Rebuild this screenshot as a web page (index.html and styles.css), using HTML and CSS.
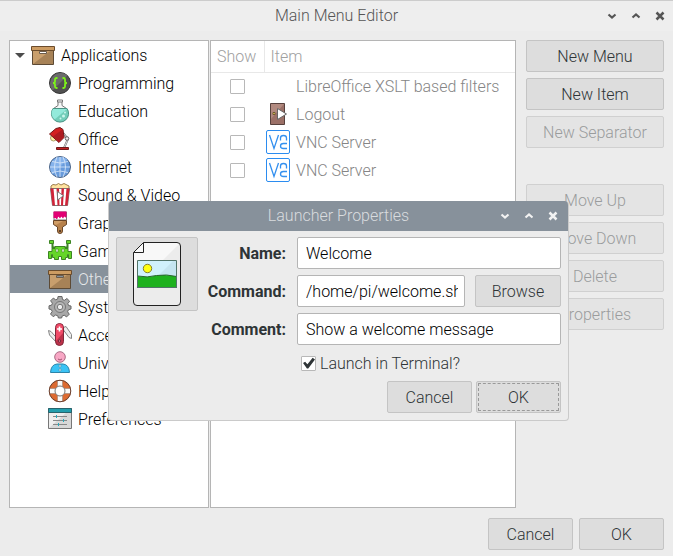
FILE: index.html
```html
<!DOCTYPE html>
<html lang="en">
<head>
<meta charset="utf-8">
<title>Main Menu Editor</title>
<link rel="stylesheet" href="styles.css">
</head>
<body>
<svg class="defs" aria-hidden="true">
  <symbol id="i-box" viewBox="0 0 24 24">
    <path d="M1.500 7.500h21v14h-21z" fill="#a78257" stroke="#5d4a35"/>
    <path d="M2 8h17L2 21z" fill="#c99f6d"/>
    <path d="M.5 3.500h23v4H.5z" fill="#cd9c62" stroke="#6b4c2c"/>
    <path d="M8.500 8.500h7v2h-7z" fill="currentColor" stroke="#6b5c4c"/>
  </symbol>
  <symbol id="i-down" viewBox="0 0 10 10"><path d="M1.500 3.500 5 6.500l3.500-3" fill="none" stroke="currentColor" stroke-width="2.200"/></symbol>
  <symbol id="i-up" viewBox="0 0 10 10"><path d="M1.500 6.500 5 3.500l3.500 3" fill="none" stroke="currentColor" stroke-width="2.200"/></symbol>
  <symbol id="i-close" viewBox="0 0 10 10"><path d="M1.500 1.500l7 7m0-7l-7 7" fill="none" stroke="currentColor" stroke-width="2.500"/></symbol>
  <symbol id="i-vnc" viewBox="0 0 24 24">
    <rect x=".5" y=".5" width="23" height="23" rx="1.500" fill="#fff" stroke="#2b8cf0"/>
    <path d="M3.500 5 8 18.500 12.500 5M14.500 10.500V8q0-2.500 3-2.500t3 2.500v2.500M21 13.500h-3.500q-3 0-3 2.500t3 2.500H21" fill="none" stroke="#3490ef" stroke-width="1.300"/>
  </symbol>
</svg>

<main class="window">
  <header class="titlebar">
    <h1>Main Menu Editor</h1>
    <div class="controls">
      <button aria-label="Minimize"><svg><use href="#i-down"/></svg></button>
      <button aria-label="Maximize"><svg><use href="#i-up"/></svg></button>
      <button aria-label="Close"><svg><use href="#i-close"/></svg></button>
    </div>
  </header>

  <div class="workspace">
    <nav class="panel tree">
      <div class="row root">
        <span class="expander"></span>
        <svg class="icon"><use href="#i-box"/></svg>Applications
      </div>
      <ul>
        <li class="row"><svg class="icon" viewBox="0 0 24 24">
          <circle cx="12" cy="12" r="10.500" fill="#515151" stroke="#363636"/><path d="M4.600 19.400A10.500 10.500 0 0 1 19.400 4.600z" fill="#6b6b6b"/>
          <path d="M9.500 7H8.500q-1.500 0-1.500 1.500v2q0 1.500-2 1.500 2 0 2 1.500v2Q7 17 8.500 17h1M14.500 7h1q1.500 0 1.500 1.500v2q0 1.500 2 1.500-2 0-2 1.500v2q0 1.500-1.500 1.500h-1" fill="none" stroke="#7cf21a" stroke-width="1.800"/></svg>Programming</li>
        <li class="row"><svg class="icon" viewBox="0 0 24 24">
          <path d="M10 2v4.500L5.500 9.500h13L14 6.500V2" fill="#f5f7f7" stroke="#777"/><path d="M9.500 1h5v2h-5z" fill="#fff" stroke="#777"/>
          <path d="M5 9.500h14A8.600 8.600 0 1 1 5 9.500" fill="#72cdb9" stroke="#4a9384"/><path d="M5 10h14L6.500 20.500Q1.500 15 5 10" fill="#93eadb"/>
          <circle cx="15.500" cy="17" r="1.500" fill="#c9f6ec"/><circle cx="12.500" cy="19.500" r="1" fill="#c9f6ec"/><circle cx="17" cy="13.500" r="1" fill="#c9f6ec"/></svg>Education</li>
        <li class="row"><svg class="icon" viewBox="0 0 24 24">
          <path d="M15 6l5 6-4 9" fill="none" stroke="#777" stroke-width="2"/><path d="M15 6l5 6-4 9" fill="none" stroke="#f1f1f1" stroke-width=".8"/>
          <circle cx="5.500" cy="11" r="3" fill="#fff1a4" stroke="#aaa16c"/>
          <path d="M1.500 7 8 1.500l4-1 3 2 1 8-5 5z" fill="#d32020" stroke="#701919"/><path d="M5 9.500l9.500-7 1 8-4.500 4.500z" fill="#ad1b20"/>
          <circle cx="19" cy="11.500" r="1.800" fill="#eee" stroke="#666"/><path d="M8.500 20.500h12v2h-12z" fill="#c11f20" stroke="#701919"/></svg>Office</li>
        <li class="row"><svg class="icon" viewBox="0 0 24 24">
          <circle cx="12" cy="12" r="10.500" fill="#689bdc" stroke="#4c6588"/><path d="M4.600 19.400A10.500 10.500 0 0 1 19.400 4.600z" fill="#85b2eb"/>
          <path d="M12 2v20M2 12h20M4 6.500q8 3 16 0M4 17.500q8-3 16 0M9 2q-5 10 0 20M15 2q5 10 0 20" fill="none" stroke="#dceafa" stroke-width=".8"/></svg>Internet</li>
        <li class="row"><svg class="icon" viewBox="0 0 24 24">
          <path d="M3 5.500V3l2-1.500 3 .5 2.500-1.500L13 2l3-1.500L19 2l2 1v2.500z" fill="#ffe3a0" stroke="#9b7c4d"/>
          <path d="M2.500 5.500h19l-2 17h-15z" fill="#fff" stroke="#777"/>
          <path d="M2.500 5.500h3l1.500 17H4.500zM8.500 5.500h2.500l.5 17H9.500zM13.500 5.500H16l-1 17h-2zM18.500 5.500h3l-2 17H17z" fill="#d02338"/>
          <path d="M9.500 8.500v8.500l6-4.200z" fill="#fff" stroke="#777"/></svg>Sound &amp; Video</li>
        <li class="row"><svg class="icon" viewBox="0 0 24 24">
          <path d="M6 1h12.500v8H6z" fill="#fff" stroke="#777"/><path d="M5.500.5h13v5q-1 2-2 0-1 0-1 1.500-1 1-1.500-1-1-1-1.500 1-1 1-1.500-1-1-1-1.500 1.500-1 1-1.500 0L7.500 7h-2z" fill="#e20074"/>
          <path d="M5.500 9.500h13v4L14.500 16v4q0 2.500-2.500 2.500T9.500 20v-4L5.500 13.500z" fill="#b7814b" stroke="#694629"/><path d="M6 10h9l-7 4-2-1z" fill="#d09d66"/><circle cx="12" cy="20" r="1" fill="#3e2b1c"/></svg>Graphics</li>
        <li class="row"><svg class="icon" viewBox="0 0 24 24">
          <path d="M4.500 4v4.500h2v3M19.500 4v4.500h-2v3" fill="none" stroke="#3d8424" stroke-width="2"/>
          <path d="M1.500 1.500h4v3h-4zM18.500 1.500h4v3h-4zM7 7.500h10v2h3v3h3.500v7h-3v-4h-1v3h-2v2h-4v-3h-3v3h-4v-2h-2v-3h-1v4h-3v-7H4v-3h3z" fill="#65d629" stroke="#3d8424"/>
          <path d="M8 10h2v3H8zM14 10h2v3h-2z" fill="#fff" stroke="#3d8424" stroke-width=".6"/></svg>Games</li>
        <li class="row selected"><svg class="icon"><use href="#i-box"/></svg>Other</li>
        <li class="row"><svg class="icon" viewBox="0 0 24 24">
          <path d="M10 1.500h4l.5 3 2 .8 2.400-1.800 2.700 2.700-1.800 2.400.8 2 2.400.4v3l-2.600.8-.8 2 1.700 2.400-2.700 2.700-2.400-1.700-2 .8-.6 2h-3.200l-.6-2.200-2.200-.8-2.400 1.700-2.700-2.700 1.700-2.400-.8-2-2.400-.6v-3.200l2.600-.6.8-2-1.800-2.400 2.700-2.700 2.400 1.700 2-.8z" fill="#a8a8a8" stroke="#666"/>
          <circle cx="12" cy="12" r="5.500" fill="#b5b5b5" stroke="#777"/><circle cx="12" cy="12" r="2.700" fill="#eee" stroke="#777"/></svg>System Tools</li>
        <li class="row"><svg class="icon" viewBox="0 0 24 24">
          <path d="M.5 7.500 3 8.500l7 8-1.500 3L1.500 12zM14 5l4-1.500 5.500 8v4l-2.500-1z" fill="#eee" stroke="#858585"/>
          <rect x="7.500" y=".5" width="8" height="22" rx="4" fill="#bd3149" stroke="#81283a"/><path d="M8 18V5q0-4 3.500-4T15 5v5z" fill="#f04b68"/>
          <path d="M11.500 3.500v5M9 6h5" stroke="#fff" stroke-width="1.600"/><circle cx="11.500" cy="18" r="1.200" fill="#de8190" stroke="#71263b"/></svg>Accessories</li>
        <li class="row"><svg class="icon" viewBox="0 0 24 24">
          <path d="M2.500 21.500q.5-8 6.500-8.500h6q6 .5 6.500 8.500z" fill="#3bc3f5" stroke="#2c84a9"/><circle cx="12" cy="6" r="5.300" fill="#f8a7c5" stroke="#a96b83"/>
          <path d="M10 8q2 2 4 0" fill="none" stroke="#a25272"/><circle cx="12" cy="15" r="1.200" fill="#d2f2ff" stroke="#4c819a" stroke-width=".6"/><circle cx="12" cy="19" r="1.200" fill="#d2f2ff" stroke="#4c819a" stroke-width=".6"/></svg>Universal Access</li>
        <li class="row"><svg class="icon" viewBox="0 0 24 24">
          <circle cx="12" cy="12" r="8" fill="none" stroke="#dc6a31" stroke-width="6"/>
          <path d="M9.500 1.500h5v6h-5zM9.500 16.500h5v6h-5zM1.500 9.500h6v5h-6zM16.500 9.500h6v5h-6z" fill="#fafafa"/>
          <circle cx="12" cy="12" r="10.800" fill="none" stroke="#674132"/><circle cx="12" cy="12" r="5" fill="#fff" stroke="#777"/><path d="M9.500 2v5.500M14.500 2v5.500M9.500 16.500V22M14.500 16.500V22M2 9.500h5.500M2 14.500h5.500M16.500 9.500H22M16.500 14.500H22" stroke="#9b8175" stroke-width=".6"/></svg>Help</li>
        <li class="row"><svg class="icon" viewBox="0 0 24 24">
          <path d="M.5 1.500h23v20H.5z" fill="#d8d8d8" stroke="#777"/><path d="M1 5h18L1 21z" fill="#eee"/><path d="M.5 1.500h23v4H.5z" fill="#219dac" stroke="#28636c"/>
          <path d="M5 9.500h14M5 13.500h14M5 17.500h14" stroke="#888"/><path d="M8.500 8v3M15.500 12v3M10.500 16v3" stroke="#24acbe"/></svg>Preferences</li>
      </ul>
    </nav>

    <section class="panel items">
      <table>
        <thead><tr><th class="show">Show</th><th>Item</th></tr></thead>
        <tbody>
          <tr><td class="show"><input type="checkbox" aria-label="Show LibreOffice XSLT based filters"></td><td><div class="item"><span class="icon"></span>LibreOffice XSLT based filters</div></td></tr>
          <tr><td class="show"><input type="checkbox" aria-label="Show Logout"></td><td><div class="item"><svg class="icon" viewBox="0 0 24 24">
            <path d="M4.500 1.500h14v21h-14z" fill="#9b7067" stroke="#57413d"/><path d="M5 2h13L5 17z" fill="#b28a80"/>
            <path d="M7 10.500h2v2H7z" fill="#ffe46a" stroke="#5d4a22" stroke-width=".8"/><path d="M11.500 6.500v11l9-5.500z" fill="#fff" stroke="#666"/></svg>Logout</div></td></tr>
          <tr><td class="show"><input type="checkbox" aria-label="Show VNC Server"></td><td><div class="item"><svg class="icon"><use href="#i-vnc"/></svg>VNC Server</div></td></tr>
          <tr><td class="show"><input type="checkbox" aria-label="Show second VNC Server"></td><td><div class="item"><svg class="icon"><use href="#i-vnc"/></svg>VNC Server</div></td></tr>
        </tbody>
      </table>
    </section>

    <aside class="actions">
      <button class="btn">New Menu</button>
      <button class="btn">New Item</button>
      <button class="btn" disabled>New Separator</button>
      <div class="divider"></div>
      <button class="btn" disabled>Move Up</button>
      <button class="btn" disabled>Move Down</button>
      <button class="btn" disabled>Delete</button>
      <button class="btn" disabled>Properties</button>
    </aside>
  </div>

  <footer class="footer">
    <button class="btn">Cancel</button>
    <button class="btn">OK</button>
  </footer>
</main>

<section class="dialog" role="dialog" aria-labelledby="dialog-title">
  <header class="titlebar">
    <h2 id="dialog-title">Launcher Properties</h2>
    <div class="controls">
      <button aria-label="Minimize dialog"><svg><use href="#i-down"/></svg></button>
      <button aria-label="Maximize dialog"><svg><use href="#i-up"/></svg></button>
      <button aria-label="Close dialog"><svg><use href="#i-close"/></svg></button>
    </div>
  </header>
  <form class="form">
    <button type="button" class="btn picker" aria-label="Choose icon"><svg viewBox="0 0 50 66">
      <path d="M11.500 1.500H45q3.500 0 3.500 3.500v56q0 3.500-3.500 3.500H5q-3.500 0-3.500-3.500V11.500z" fill="#ececec"/>
      <path d="M11.500 2H45l2 1L2 48V11.500z" fill="#f8f8f8"/>
      <path d="M11.500 1.500H45q3.500 0 3.500 3.500v56q0 3.500-3.500 3.500H5q-3.500 0-3.500-3.500V11.500zM11.500 1.500v10h-10" fill="none" stroke="#222"/>
      <path d="M5.500 19.500h39v27h-39z" fill="#c5e5f0"/><path d="M6 20h35L19 42H6z" fill="#d0f1fc"/>
      <path d="M5.500 35q10 2 19-.5 10-1.500 20 1v11h-39z" fill="#1eb11e" stroke="#28652d"/>
      <path d="M5.500 19.500h39v27h-39z" fill="none" stroke="#527469"/><circle cx="15.500" cy="27.500" r="4.200" fill="#ff1" stroke="#85802d"/></svg></button>
    <div class="fields">
      <label for="name">Name:</label>
      <input id="name" type="text" value="Welcome">
      <label for="command">Command:</label>
      <div class="pair"><input id="command" type="text" value="/home/pi/welcome.sh"><button type="button" class="btn">Browse</button></div>
      <label for="comment">Comment:</label>
      <input id="comment" type="text" value="Show a welcome message">
      <div class="check"><input id="terminal" type="checkbox" checked><label for="terminal">Launch in Terminal?</label></div>
    </div>
    <div class="buttons">
      <button type="button" class="btn">Cancel</button>
      <button type="button" class="btn focused">OK</button>
    </div>
  </form>
</section>
</body>
</html>
```
FILE: styles.css
```css
* { box-sizing: border-box; }

body {
  margin: 0;
  background: #ececec;
  color: #2e3436;
  font: 300 16px/21px Roboto, sans-serif;
}

button, input { font: inherit; color: inherit; }

.defs { position: absolute; width: 0; height: 0; }

.window {
  display: flex;
  flex-direction: column;
  min-height: 100vh;
  border-top: 1px solid #cccccc;
}

.titlebar {
  display: grid;
  grid-template-columns: 1fr;
  align-items: center;
  height: 30px;
  background: #eeeeee;
  color: #555555;
}

.titlebar h1, .titlebar h2 {
  grid-area: 1 / 1;
  margin: 0;
  font: inherit;
  line-height: 20px;
  text-align: center;
}

.controls {
  grid-area: 1 / 1;
  justify-self: end;
  display: flex;
  gap: 14px;
  padding-right: 8px;
}

.controls button {
  display: block;
  width: 10px;
  height: 10px;
  padding: 0;
  border: 0;
  background: none;
}

.controls svg { display: block; width: 10px; height: 10px; }

.workspace {
  flex: 1;
  display: flex;
  padding: 9px 9px 0;
}

.panel {
  background: #ffffff;
  border: 1px solid #b5b5b5;
}

.tree { width: 200px; color: #000000; }
.tree ul { margin: 0; padding: 0; list-style: none; }

.row {
  display: flex;
  align-items: center;
  gap: 6px;
  height: 28px;
  padding-left: 38px;
  white-space: nowrap;
}

.root { padding-left: 5px; gap: 6px; }
.selected { background: #87919b; color: #e6e8ea; }
.row .icon { color: #ffffff; }
.selected .icon { color: #87919b; }

.expander {
  border: 5px solid transparent;
  border-top-color: #4c4c4c;
  border-bottom: 0;
}

.icon { flex: none; width: 24px; height: 24px; }

.items { flex: 1; margin-left: 1px; color: #858585; }

table { width: 100%; border-collapse: collapse; table-layout: fixed; }

th {
  height: 31px;
  padding: 0 6px;
  border-bottom: 1px solid #e8e8e8;
  color: #a0a0a0;
  font-weight: 300;
  text-align: left;
}

th.show { border-right: 1px solid #e8e8e8; }
.show { width: 53px; }
td { height: 28px; padding: 0 2px; }
td.show { text-align: center; line-height: 20px; }
.item { display: flex; align-items: center; gap: 6px; white-space: nowrap; }

input[type="checkbox"] {
  appearance: none;
  display: inline-block;
  width: 15px;
  height: 15px;
  margin: 0;
  border: 1px solid #b8b8b8;
  border-radius: 1px;
  background: #ffffff;
  vertical-align: middle;
}

td input[type="checkbox"] { display: block; margin: 0 auto; }

input[type="checkbox"]:checked::before {
  content: "";
  display: block;
  width: 13px;
  height: 13px;
  background: #2e3436;
  clip-path: polygon(8% 50%, 24% 40%, 42% 60%, 82% 10%, 100% 24%, 48% 92%, 38% 92%);
}

.actions {
  display: flex;
  flex-direction: column;
  gap: 6px;
  width: 138px;
  margin-left: 10px;
}

.divider { height: 24px; }

.btn {
  height: 32px;
  padding: 0;
  border: 1px solid #c4c4c4;
  border-radius: 2px;
  background: #dddddd;
}

.btn:disabled {
  border-color: #d0d0d0;
  background: #e4e4e4;
  color: #9a9c9d;
}

.footer {
  display: flex;
  justify-content: flex-end;
  gap: 6px;
  padding: 10px 9px 6px;
}

.footer .btn, .buttons .btn { width: 85px; }

.dialog {
  position: absolute;
  top: 201px;
  left: 108px;
  width: 461px;
  border: 1px solid #cacaca;
  border-top: 0;
  border-radius: 4px;
  background: #ececec;
  overflow: hidden;
}

.dialog .titlebar {
  margin: 0 -1px;
  background: #87919b;
  color: #d9dcdf;
}

.dialog .controls { color: #f2f2f2; padding-right: 11px; }

.form {
  display: grid;
  grid-template-columns: 82px 1fr;
  gap: 6px;
  padding: 6px 7px 7px;
}

.picker {
  display: grid;
  place-items: center;
  height: 74px;
}

.picker svg { width: 50px; height: 66px; }

.fields {
  display: grid;
  grid-template-columns: 82px minmax(0, 264px);
  justify-content: end;
  align-items: center;
  gap: 6px 11px;
}

.fields > label { font-weight: 700; text-align: right; }

input[type="text"] {
  width: 100%;
  min-width: 0;
  height: 32px;
  padding: 0 8px;
  border: 1px solid #b5b5b5;
  border-radius: 2px;
  background: #ffffff;
  color: #000000;
  line-height: 20px;
}

.pair { display: flex; gap: 10px; }
.pair .btn { flex: none; width: 86px; }
.pair input[type="text"] { padding-right: 6px; }

.check {
  grid-column: 2;
  display: flex;
  align-items: center;
  gap: 4px;
  height: 24px;
  padding-left: 4px;
}

.buttons {
  grid-column: 1 / -1;
  display: flex;
  justify-content: flex-end;
  gap: 4px;
}

.focused { outline: 1px dashed #999999; outline-offset: -3px; }
```
